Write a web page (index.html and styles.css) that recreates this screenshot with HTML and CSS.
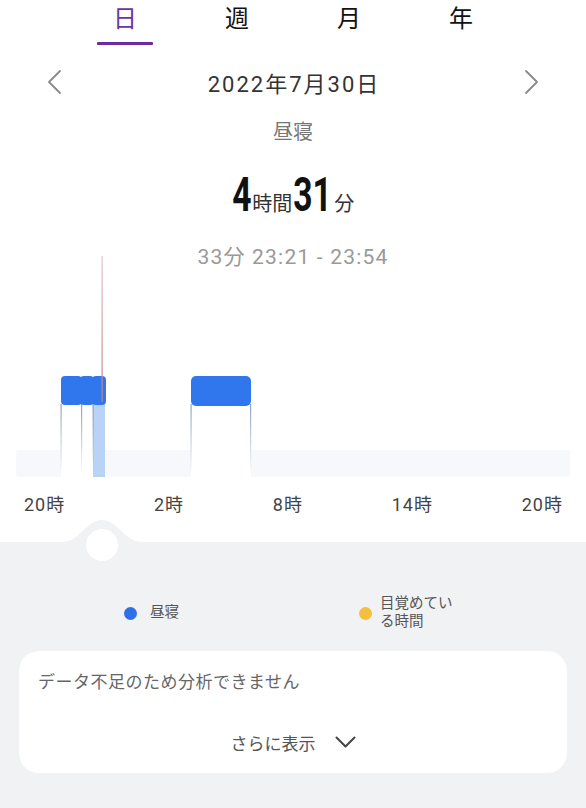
FILE: index.html
```html
<!DOCTYPE html>
<html lang="ja">
<head>
<meta charset="utf-8">
<title>昼寝</title>
<link rel="stylesheet" href="styles.css">
</head>
<body>
<div class="app">
  <nav class="tabs">
    <div class="tab active"><span>日</span><i class="bar"></i></div>
    <div class="tab"><span>週</span></div>
    <div class="tab"><span>月</span></div>
    <div class="tab"><span>年</span></div>
  </nav>

  <div class="date-row">
    <span class="nav"><svg width="24" height="26" viewBox="0 0 24 26"><polyline points="17,2 6,13 17,24" fill="none" stroke="#8a8a8a" stroke-width="1.8" stroke-linecap="round" stroke-linejoin="round"/></svg></span>
    <div class="date">2022年7月30日</div>
    <span class="nav"><svg width="24" height="26" viewBox="0 0 24 26"><polyline points="7,2 18,13 7,24" fill="none" stroke="#8a8a8a" stroke-width="1.8" stroke-linecap="round" stroke-linejoin="round"/></svg></span>
  </div>

  <div class="kind">昼寝</div>

  <div class="total">
    <span class="num one">4</span><span class="unit">時間</span><span class="num two">31</span><span class="unit">分</span>
  </div>

  <div class="range">33分 23:21 - 23:54</div>

  <svg class="chart" width="586" height="205" viewBox="0 275 586 205">
    <defs>
      <linearGradient id="edge" x1="0" y1="0" x2="0" y2="1">
        <stop offset="0" stop-color="#8497b5" stop-opacity="0.9"/>
        <stop offset="1" stop-color="#8497b5" stop-opacity="0"/>
      </linearGradient>
      <linearGradient id="red" x1="0" y1="0" x2="0" y2="1">
        <stop offset="0" stop-color="#e7c4cb"/>
        <stop offset="1" stop-color="#c27c89"/>
      </linearGradient>
    </defs>
    <rect x="16" y="450" width="554" height="27" rx="3" fill="#f6f8fb"/>
    <rect x="61" y="404" width="32" height="73" fill="#ffffff"/>
    <rect x="191" y="404" width="60" height="73" fill="#ffffff"/>
    <rect x="93" y="404" width="12" height="73" fill="#b9d3f6"/>
    <rect x="60.5" y="404" width="1.2" height="70" fill="url(#edge)"/>
    <rect x="81" y="404" width="1.2" height="70" fill="url(#edge)"/>
    <rect x="92.5" y="404" width="1.2" height="70" fill="url(#edge)"/>
    <rect x="190.5" y="404" width="1.2" height="70" fill="url(#edge)"/>
    <rect x="250" y="404" width="1.2" height="70" fill="url(#edge)"/>
    <rect x="61" y="376" width="21" height="29" rx="4" fill="#3077ee"/>
    <rect x="80" y="376" width="14" height="29" rx="4" fill="#3077ee"/>
    <rect x="92" y="376" width="14" height="29" rx="4" fill="#3077ee"/>
    <rect x="191" y="376" width="60" height="30" rx="5" fill="#3077ee"/>
    <rect x="101.5" y="256" width="1.2" height="146" fill="url(#red)"/>
  </svg>

  <div class="axis">
    <span>20時</span><span>2時</span><span>8時</span><span>14時</span><span>20時</span>
  </div>

  <section class="panel">
    <svg class="bump" width="80" height="42" viewBox="0 0 80 42">
      <path d="M0,22 C18,22 24,0 40,0 C56,0 62,22 80,22 L80,42 L0,42 Z" fill="#f1f2f4"/>
      <circle cx="40" cy="25" r="16" fill="#ffffff"/>
    </svg>

    <div class="legend">
      <div class="legend-item left"><i class="dot blue"></i><span class="lbl">昼寝</span></div>
      <div class="legend-item right"><i class="dot yellow"></i><span class="lbl">目覚めてい<br>る時間</span></div>
    </div>

    <div class="card">
      <p class="msg">データ不足のため分析できません</p>
      <div class="more">
        <span>さらに表示</span>
        <svg width="21" height="12" viewBox="0 0 21 12"><polyline points="1.5,1.5 10.5,10.5 19.5,1.5" fill="none" stroke="#444" stroke-width="2" stroke-linecap="round" stroke-linejoin="round"/></svg>
      </div>
    </div>
  </section>
</div>
</body>
</html>
```

FILE: styles.css
```css
* { box-sizing: border-box; }

html, body {
  margin: 0;
  padding: 0;
  background: #ffffff;
}

body {
  font-family: Roboto, "Noto Sans CJK JP", "Noto Sans", sans-serif;
  color: #222;
}

.app {
  width: 586px;
  min-height: 808px;
  display: flex;
  flex-direction: column;
}

/* tabs */
.tabs {
  display: grid;
  grid-template-columns: repeat(4, 112px);
  padding: 0 69px;
  height: 50px;
}

.tab {
  display: flex;
  flex-direction: column;
  align-items: center;
}

.tab span {
  font-size: 24px;
  line-height: 38px;
  color: #111;
}

.tab.active span {
  color: #6c33a6;
}

.tab .bar {
  display: block;
  width: 56px;
  height: 3px;
  margin-top: 4px;
  background: #6a2ba3;
  border-radius: 1px;
}

/* date */
.date-row {
  height: 64px;
  display: flex;
  align-items: center;
  justify-content: space-between;
  padding: 0 43px;
}

.nav {
  display: flex;
  width: 24px;
  height: 26px;
}

.date {
  font-size: 22px;
  color: #333;
  letter-spacing: 2px;
  margin-right: -2px;
}

.kind {
  height: 36px;
  line-height: 36px;
  text-align: center;
  font-size: 20px;
  color: #777;
}

.total {
  height: 90px;
  padding-top: 21px;
  display: flex;
  justify-content: center;
  align-items: baseline;
}

.num {
  display: inline-block;
  font-family: Roboto, sans-serif;
  font-weight: 700;
  font-size: 48px;
  line-height: 48px;
  color: #111;
  transform: scaleX(0.7);
}

.num.one { margin: 0 -3px 0 -4px; }
.num.two { margin: 0 -6px 0 -7px; }

.unit {
  font-size: 20px;
  line-height: 24px;
  color: #333;
}

.range {
  height: 35px;
  line-height: 35px;
  text-align: center;
  font-size: 21px;
  letter-spacing: 1.2px;
  color: #999;
}

.chart {
  display: block;
  overflow: visible;
}

.axis {
  height: 45px;
  display: flex;
  justify-content: space-between;
  align-items: center;
  padding: 0 23px 0 24px;
  margin-bottom: 17px;
  font-size: 18px;
  letter-spacing: 1px;
  color: #444;
}

/* bottom panel */
.panel {
  position: relative;
  flex: 1;
  background: #f1f2f4;
  padding-top: 53px;
}

.bump {
  position: absolute;
  left: 62px;
  top: -22px;
  overflow: visible;
}

.legend {
  display: grid;
  grid-template-columns: 235px auto;
  padding-left: 124px;
}

.legend-item {
  display: flex;
  align-items: center;
  height: 36px;
}

.legend-item.left { gap: 13px; }
.legend-item.right { gap: 8px; }

.dot {
  display: block;
  width: 13px;
  height: 13px;
  border-radius: 50%;
}

.dot.blue { background: #2f6fe8; }
.dot.yellow { background: #f4bf40; }

.lbl {
  font-size: 14.5px;
  line-height: 18px;
  color: #555;
}

.card {
  margin: 20px 19px 0;
  background: #ffffff;
  border-radius: 20px;
  padding: 19px 19px 17px;
}

.msg {
  margin: 0;
  font-size: 17px;
  letter-spacing: 0.5px;
  line-height: 24px;
  color: #666;
}

.more {
  margin-top: 34px;
  height: 28px;
  display: flex;
  justify-content: center;
  align-items: center;
  gap: 19px;
  font-size: 17px;
  color: #555;
}
```
